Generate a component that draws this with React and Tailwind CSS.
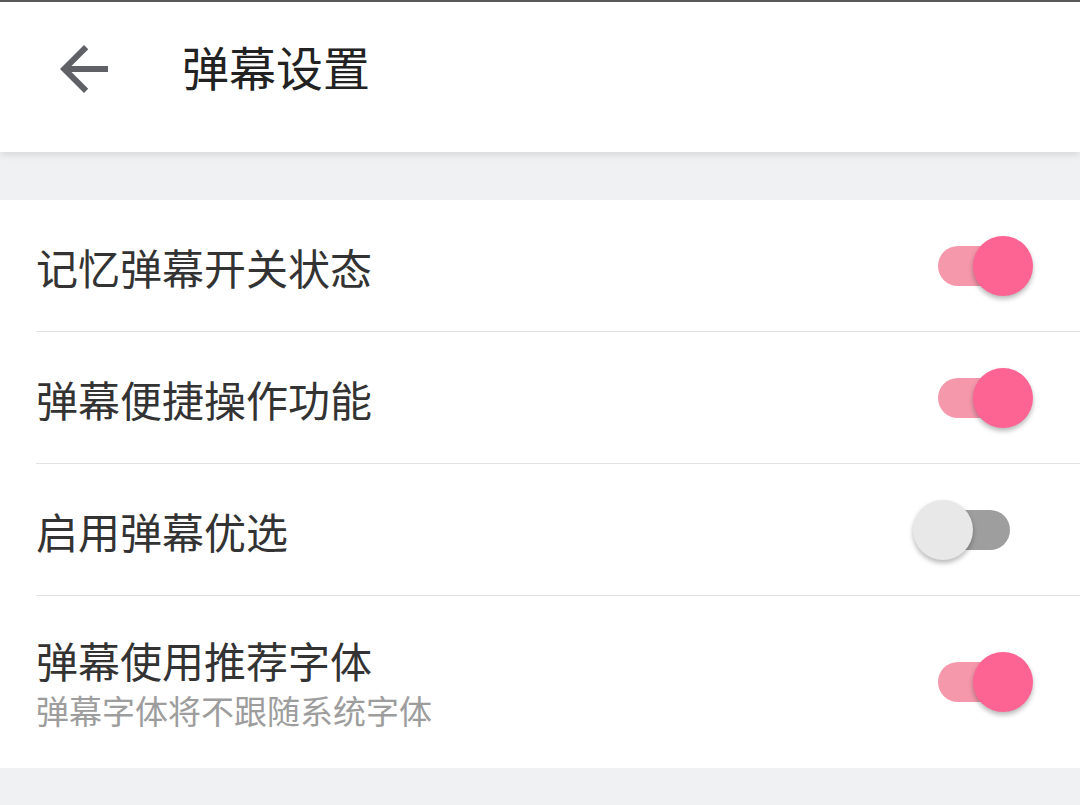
import React from 'react';

const font = { fontFamily: '"Noto Sans CJK SC", "Noto Sans", sans-serif' };

const Toggle = ({ on }) => (
    <div className="relative w-[120px] h-[60px] shrink-0">
        <div
            className={
                'absolute left-[25px] top-[10px] w-[72px] h-[40px] rounded-full ' +
                (on ? 'bg-[#f598ac]' : 'bg-[#9e9e9e]')
            }
        />
        <div
            className={
                'absolute top-0 w-[60px] h-[60px] rounded-full shadow-[0_3px_5px_rgba(0,0,0,0.28)] ' +
                (on ? 'left-[60px] bg-[#fd6493]' : 'left-0 bg-[#e8e8e8]')
            }
        />
    </div>
);

const Row = ({ title, subtitle, on, last }) => (
    <div className="ml-[36px]">
        <div
            className={
                'flex items-center justify-between pr-[47px] ' +
                (subtitle ? 'h-[172px] ' : 'h-[132px] ') +
                (last ? '' : 'border-b border-[#e2e2e2]')
            }
        >
            <div className="pt-[2px]">
                <div className="text-[42px] leading-[1.22] text-[#333333]">{title}</div>
                {subtitle && (
                    <div className="mt-[3px] text-[33px] leading-[1.3] text-[#9d9d9d]">{subtitle}</div>
                )}
            </div>
            <Toggle on={on} />
        </div>
    </div>
);

export default function App() {
    return (
        <div className="w-full h-[805px] bg-[#f0f1f3] overflow-hidden" style={font}>
            {/* Header */}
            <header className="relative z-10 h-[152px] bg-white border-t-2 border-[#5a5a5a] shadow-[0_2px_8px_rgba(0,0,0,0.12)] flex items-start">
                <svg
                    className="ml-[48px] mt-[31px] w-[72px] h-[72px]"
                    viewBox="0 0 24 24"
                    fill="#5f6166"
                >
                    <path d="M20 11H7.83l5.59-5.59L12 4l-8 8 8 8 1.41-1.41L7.83 13H20v-2z" />
                </svg>
                <h1 className="ml-[62px] mt-[36px] text-[47px] leading-[56px] text-[#222222] font-normal">弹幕设置</h1>
            </header>

            {/* Settings list */}
            <div className="mt-[48px] bg-white">
                <Row title="记忆弹幕开关状态" on />
                <Row title="弹幕便捷操作功能" on />
                <Row title="启用弹幕优选" on={false} />
                <Row title="弹幕使用推荐字体" subtitle="弹幕字体将不跟随系统字体" on last />
            </div>
        </div>
    );
}
